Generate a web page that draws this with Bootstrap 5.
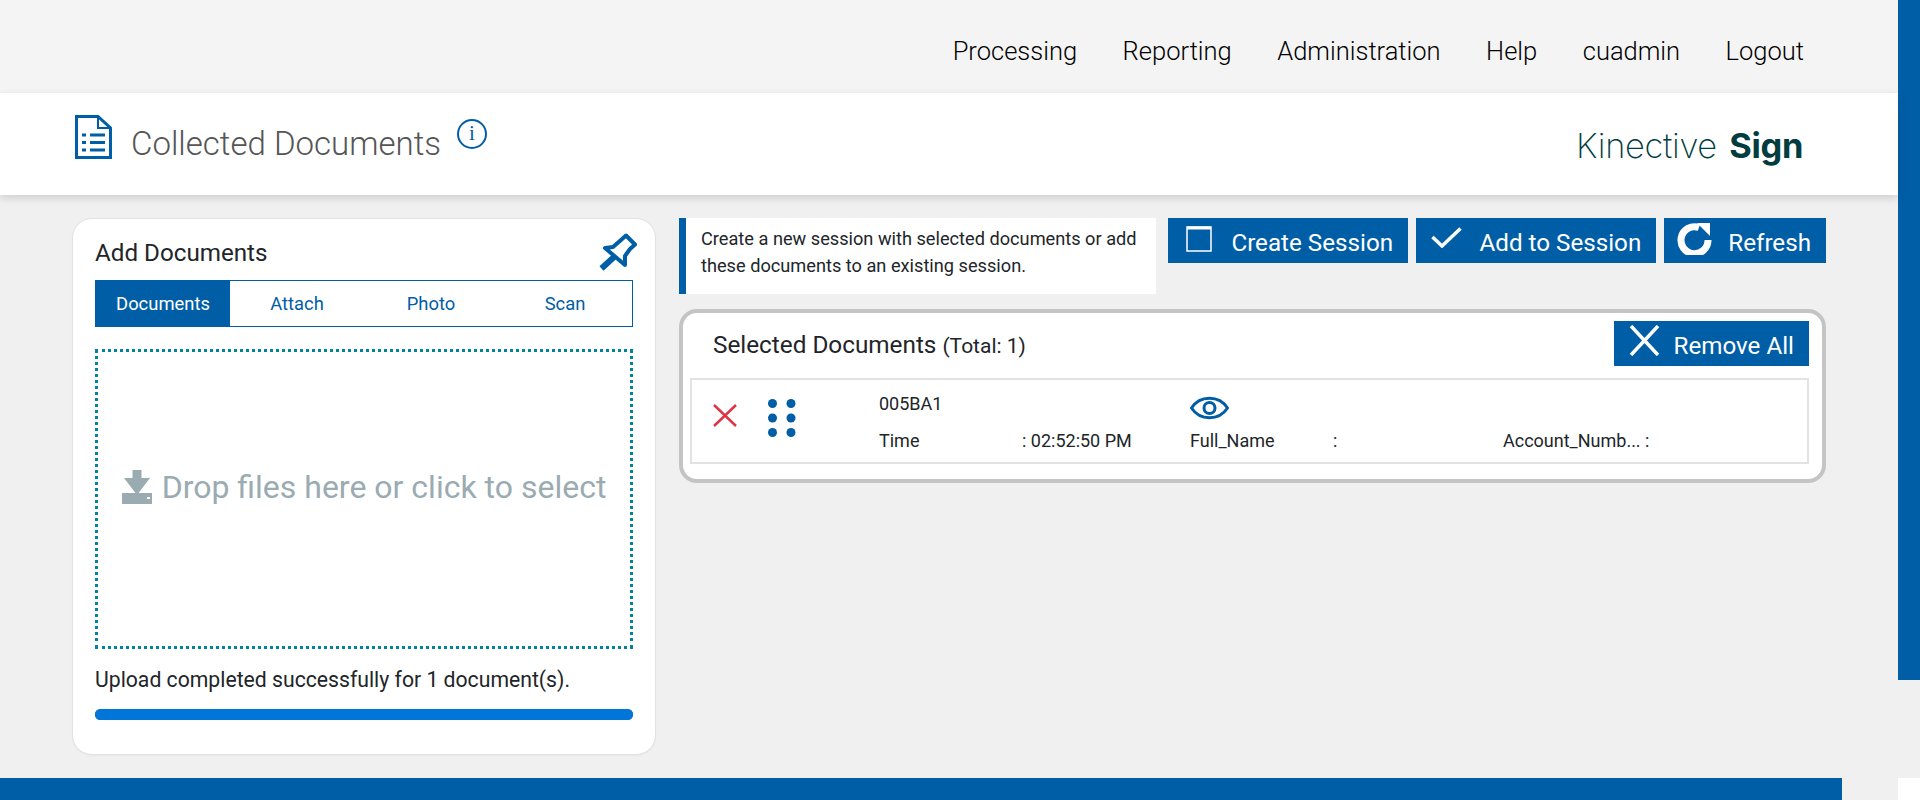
<!DOCTYPE html>
<html lang="en">
<head>
<meta charset="utf-8">
<title>Collected Documents</title>
<link href="https://cdn.jsdelivr.net/npm/bootstrap@5.3.0/dist/css/bootstrap.min.css" rel="stylesheet">
<style>
html,body{height:800px;overflow:hidden}
body{background:#f0f0f0;font-family:Roboto,"Liberation Sans",sans-serif;color:#212529}
.kn-shell{height:800px}
.kn-upper{height:778px}
.kn-main{width:1898px}
.kn-side{width:22px;height:680px;background:#005ea6}
.kn-foot{height:22px}
.kn-foot-bar{width:1842px;background:#005ea6}
.kn-foot-end{width:22px;background:#fff}
.kn-topbar{height:93px;background:#f4f4f4;padding:0 94px 0 0}
.kn-topbar .navbar-nav{gap:45.5px;margin-top:9px}
.kn-topbar .navbar-nav .nav-link{font-size:25.5px;font-weight:300;color:#000;padding:0;line-height:32px}
.kn-band{height:102px;background:#fff;box-shadow:0 3px 8px rgba(0,0,0,.14);padding:22px 95px 0 75px;position:relative}
.kn-title{font-size:33px;font-weight:300;color:#555;margin:0 0 0 19px;line-height:40px;padding-top:9px}
.kn-info{width:30px;height:30px;border:2px solid #005ea6;color:#005ea6;font:400 21px/25px "Liberation Serif",serif;text-align:center;margin:4px 0 0 16px}
.kn-logo{font-family:Inter,"Liberation Sans",sans-serif;font-size:34.4px;font-weight:200;color:#003c40;line-height:40px;letter-spacing:-.3px;word-spacing:3px;margin-top:11px}
.kn-logo b{font-weight:700}
.kn-body{padding:23px 72px 0 72px;gap:23px}
.kn-addcard{width:584px;height:537px;border:1px solid #e2e2e2;border-radius:20px;padding:0 22px;box-shadow:0 1px 2px rgba(0,0,0,.04)}
.kn-addhead{height:61px}
.kn-addhead h2{font-size:24.2px;font-weight:400;margin:0;padding-top:19px;line-height:30px}
.kn-pin{margin-right:-4px;margin-top:14px}
.kn-tabs{border:1px solid #005ea6;height:47px;flex-wrap:nowrap}
.kn-tabs .nav-link{flex:1 1 25%;border-radius:0;color:#005ea6;font-size:18.4px;padding:0;line-height:45px;text-align:center;margin:0}
.kn-tabs .nav-link.active{background:#005ea6;color:#fff}
.kn-drop{height:300px;margin-top:22px;border:3px dotted #00849c;color:#9aabb1;font-size:32px;gap:10px;padding-bottom:25px}
.kn-status{font-size:21.2px;margin:0;padding-top:17px;line-height:28px}
.kn-bar{height:11px;margin-top:15px;border-radius:6px;background:#0275d8}
.kn-bar .progress-bar{background:#0275d8}
.kn-right{width:1147px}
.kn-note{width:478px;height:76px;background:#fff;border-left:7px solid #005ea6;padding:7px 0 0 15px;font-size:18.2px;line-height:27px;margin-right:12px;color:#212529}
.kn-btn{height:45px;background:#005ea6;border:0;border-radius:0;color:#fff;font-size:24.2px;line-height:30px;padding:0 15px;white-space:nowrap}
.kn-btn:hover{background:#005ea6;color:#fff}
.kn-btn span{padding-top:5px}
.kn-create{padding-left:18px;gap:19px;padding-right:14.5px}
.kn-create svg{margin-top:-3px}
.kn-add{padding-left:15px;gap:18px}
.kn-add svg{margin-top:-6px}
.kn-refresh{padding-left:13px;gap:16px}
.kn-refresh svg{margin-top:-6px}
.kn-remove{padding-left:15px;gap:14px}
.kn-remove svg{margin-top:-6px}
.kn-btns{gap:8px}
.kn-panel{height:174px;margin-top:15px;border:4px solid #c4c4c4;border-radius:18px;background:#fff;padding:8px 13px 0 7px}
.kn-panel-head{height:45px;padding-left:23px}
.kn-panel-head h2{font-size:24.3px;font-weight:400;margin:0;line-height:38px;padding-top:4px}
.kn-panel-head small{font-size:21px}
.kn-row{height:86px;margin-top:12px;border:2px solid #e2e2e2;font-size:18px;position:relative}
.kn-grid{display:grid;grid-template-columns:143px 168px 143px 170px 142px 1fr;margin-left:187px;padding-top:12px}
.kn-row .kn-ic{position:absolute}
.kn-x{left:21px;top:24px}
.kn-dots{left:76px;top:19px}
.kn-id{grid-column:1/3;line-height:24px;height:37px}
.kn-eye{grid-column:3/7;margin-top:1px}
.kn-cell{line-height:24px}
</style>
</head>
<body>
<div class="kn-shell d-flex flex-column">
  <div class="kn-upper d-flex">
    <div class="kn-main d-flex flex-column">
      <nav class="navbar navbar-expand kn-topbar justify-content-end">
        <div class="navbar-nav">
          <a class="nav-link" href="#">Processing</a>
          <a class="nav-link" href="#">Reporting</a>
          <a class="nav-link" href="#">Administration</a>
          <a class="nav-link" href="#">Help</a>
          <a class="nav-link" href="#">cuadmin</a>
          <a class="nav-link" href="#">Logout</a>
        </div>
      </nav>
      <header class="kn-band d-flex align-items-start">
        <svg width="37" height="44" viewBox="0 0 37 44" fill="none" stroke="#005ea6" stroke-width="3"><path d="M1.5 1.5H23L35.5 13V42.5H1.5Z"/><path d="M23 1.5V13H35.5" stroke-width="2"/><path d="M15 20H30M15 27.5H30M15 35H30M7 20H11M7 27.5H11M7 35H11"/></svg>
        <h1 class="kn-title">Collected Documents</h1>
        <span class="kn-info rounded-circle">i</span>
        <span class="kn-logo ms-auto">Kinective <b>Sign</b></span>
      </header>
      <main class="kn-body d-flex align-items-start">
        <section class="card kn-addcard">
          <div class="kn-addhead d-flex justify-content-between">
            <h2>Add Documents</h2>
            <svg class="kn-pin" width="38" height="38" viewBox="0 0 38 38" fill="none" stroke="#005ea6" stroke-width="4" stroke-linejoin="round"><path d="M27 2.5L36 11.5L31 16L26 23L26 32L6 15L14 14L22 7Z"/><path d="M15 24L2.5 35.5" stroke-width="6"/></svg>
          </div>
          <nav class="nav kn-tabs">
            <a class="nav-link active" href="#">Documents</a>
            <a class="nav-link" href="#">Attach</a>
            <a class="nav-link" href="#">Photo</a>
            <a class="nav-link" href="#">Scan</a>
          </nav>
          <div class="kn-drop d-flex align-items-center justify-content-center">
            <svg width="30" height="34" viewBox="0 0 30 34" fill="#9aabb1"><path d="M10.5 0H19.5V8H28L15 25L2 8H10.5Z"/><path fill-rule="evenodd" d="M0 23H30V34H0ZM25 27H28V29H25Z"/></svg>
            <span>Drop files here or click to select</span>
          </div>
          <p class="kn-status">Upload completed successfully for 1 document(s).</p>
          <div class="progress kn-bar"><div class="progress-bar w-100"></div></div>
        </section>
        <section class="kn-right">
          <div class="d-flex align-items-start">
            <div class="kn-note">Create a new session with selected documents or add these documents to an existing session.</div>
            <div class="d-flex kn-btns">
              <button class="btn kn-btn kn-create d-flex align-items-center"><svg width="26" height="26" viewBox="0 0 26 26" fill="none" stroke="#fff" stroke-width="1.5"><rect x="1" y="1" width="24" height="24"/><path d="M1 2H25" stroke-width="3"/></svg><span>Create Session</span></button>
              <button class="btn kn-btn kn-add d-flex align-items-center"><svg width="31" height="21" viewBox="0 0 31 21" fill="none" stroke="#fff" stroke-width="3.5"><path d="M1.5 10L11 19L29.5 1.5"/></svg><span>Add to Session</span></button>
              <button class="btn kn-btn kn-refresh d-flex align-items-center"><svg width="35" height="34" viewBox="0 0 35 34" fill="none" stroke="#fff" stroke-width="7"><path d="M22 6.5A13.5 13.5 0 1 0 31 19"/><path d="M20 2H33V15Z" fill="#fff" stroke="none"/></svg><span>Refresh</span></button>
            </div>
          </div>
          <div class="kn-panel">
            <div class="kn-panel-head d-flex justify-content-between align-items-center">
              <h2>Selected Documents <small>(Total: 1)</small></h2>
              <button class="btn kn-btn kn-remove d-flex align-items-center"><svg width="31" height="31" viewBox="0 0 31 31" stroke="#fff" stroke-width="3.5"><path d="M2 1L29 30M29 1L2 30"/></svg><span>Remove All</span></button>
            </div>
            <div class="kn-row">
              <svg class="kn-ic kn-x" width="24" height="23" viewBox="0 0 24 23" stroke="#dc3545" stroke-width="2.5"><path d="M1 1L23 22M23 1L1 22"/></svg>
              <svg class="kn-ic kn-dots" width="28" height="38" viewBox="0 0 28 38" fill="#005ea6"><circle cx="4.5" cy="4.5" r="4.5"/><circle cx="23" cy="4.5" r="4.5"/><circle cx="4.5" cy="19" r="4.5"/><circle cx="23" cy="19" r="4.5"/><circle cx="4.5" cy="33.5" r="4.5"/><circle cx="23" cy="33.5" r="4.5"/></svg>
              <div class="kn-grid">
                <div class="kn-id">005BA1</div>
                <div class="kn-eye"><svg width="39" height="24" viewBox="0 0 39 24" fill="none" stroke="#005ea6" stroke-width="3"><path d="M1.5 12C10 -1 29 -1 37.5 12C29 25 10 25 1.5 12Z"/><circle cx="19.5" cy="12" r="5.5"/></svg></div>
                <div class="kn-cell">Time</div><div class="kn-cell">: 02:52:50 PM</div>
                <div class="kn-cell">Full_Name</div><div class="kn-cell">:</div>
                <div class="kn-cell">Account_Numb...</div><div class="kn-cell">:</div>
              </div>
            </div>
          </div>
        </section>
      </main>
    </div>
    <div class="kn-side"></div>
  </div>
  <footer class="kn-foot d-flex justify-content-between">
    <div class="kn-foot-bar"></div>
    <div class="kn-foot-end"></div>
  </footer>
</div>
<script src="https://cdn.jsdelivr.net/npm/bootstrap@5.3.0/dist/js/bootstrap.bundle.min.js"></script>
</body>
</html>
